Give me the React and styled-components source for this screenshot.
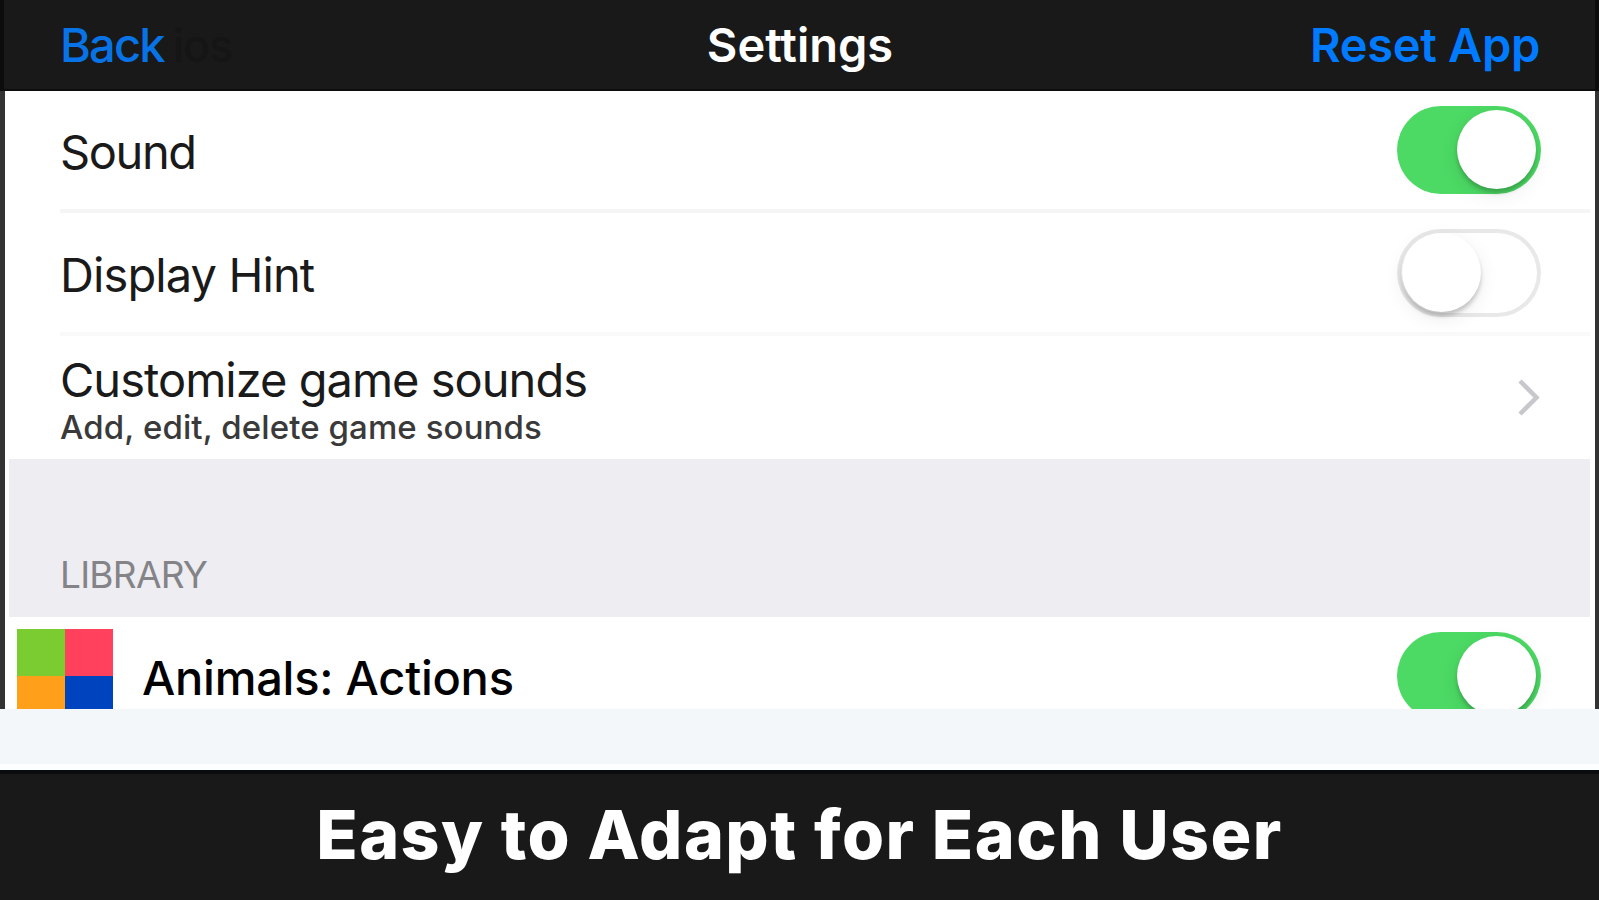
import React from "react";
import styled, { createGlobalStyle } from "styled-components";

const App = () => (
    <Screen>
        <GlobalStyle />
        <NavBar.Wrapper>
            <NavBar.Back>
                <Label $size={47} $weight={500} $spacing={-1.8} $color="#0873e6">Back</Label>
                <Label $size={45} $weight={500} $spacing={-1} $color="#151515">ios</Label>
            </NavBar.Back>
            <Label $size={47} $weight={600} $color="#fff">Settings</Label>
            <NavBar.Reset>
                <Label $size={47} $weight={600} $spacing={-0.3} $color="#007aff">Reset App</Label>
            </NavBar.Reset>
        </NavBar.Wrapper>

        <Panel>
            <Row $height={122} $line="#f5f5f6">
                <RowText>
                    <Label $size={47} $spacing={-1.4}>Sound</Label>
                </RowText>
                <Toggle on />
            </Row>
            <Row $height={123} $line="#f9f9f9">
                <RowText $top={6}>
                    <Label $size={47} $spacing={-0.9}>Display Hint</Label>
                </RowText>
                <Toggle />
            </Row>
            <Row $height={123}>
                <RowText>
                    <Label $size={47} $spacing={-0.98}>Customize game sounds</Label>
                    <Label $size={33} $weight={500} $spacing={0.1} $color="#3a3a3a">Add, edit, delete game sounds</Label>
                </RowText>
                <Chevron viewBox="0 0 22 38">
                    <path d="M2 2 L18.5 18.5 L2 35" />
                </Chevron>
            </Row>
            <SectionHeader>
                <Label $size={37} $spacing={-0.75} $color="#838388">LIBRARY</Label>
            </SectionHeader>
            <Item>
                <Tiles>
                    <Tile $color="#7acc30" />
                    <Tile $color="#ff415d" />
                    <Tile $color="#ff9f1a" />
                    <Tile $color="#0043bf" />
                </Tiles>
                <ItemName>
                    <Label $size={47} $weight={500} $spacing={-0.25} $color="#000">Animals: Actions</Label>
                </ItemName>
                <ItemToggle>
                    <Toggle on />
                </ItemToggle>
            </Item>
        </Panel>

        <Gap />
        <Footer>
            <Label $size={68} $weight={800} $spacing={1.45} $color="#fff">Easy to Adapt for Each User</Label>
        </Footer>
    </Screen>
)

const Toggle = ({ on }) => (
    <Track $on={on}>
        <Knob />
    </Track>
)

export default App;


const GlobalStyle = createGlobalStyle`
    * {
        box-sizing: border-box;
    }

    body {
        margin: 0;
        font-family: Inter, "Liberation Sans", sans-serif;
    }
`;

const Screen = styled.div`
    display: flex;
    flex-direction: column;
    width: 1599px;
    height: 900px;
    overflow: hidden;
    background: #f3f7f9;
`;

const Label = styled.span`
    font-size: ${p => p.$size}px;
    font-weight: ${p => p.$weight || 400};
    letter-spacing: ${p => p.$spacing || 0}px;
    color: ${p => p.$color || "#1a1a1a"};
    line-height: 1.2;
    white-space: nowrap;
`;

const NavBar = {
    Wrapper: styled.header`
        display: grid;
        grid-template-columns: 1fr auto 1fr;
        align-items: center;
        height: 91px;
        padding: 1px 55px 0 56px;
        background: #191919;
        border: solid #0c0c0c;
        border-width: 0 4px 2px;
    `,

    Back: styled.div`
        display: flex;
        align-items: baseline;
        gap: 9px;
    `,

    Reset: styled.div`
        display: flex;
        justify-content: flex-end;
    `,
}

const Panel = styled.main`
    height: 618px;
    overflow: hidden;
    background: #fff;
    border-left: 5px solid #333;
    border-right: 4px solid #333;
`;

const Row = styled.div`
    display: flex;
    align-items: center;
    justify-content: space-between;
    height: ${p => p.$height}px;
    margin: 0 5px 0 55px;
    padding-right: 49px;
    border-bottom: ${p => p.$line ? `4px solid ${p.$line}` : "none"};
`;

const RowText = styled.div`
    display: flex;
    flex-direction: column;
    padding-top: ${p => p.$top || 4}px;
`;

const Chevron = styled.svg`
    width: 22px;
    height: 38px;
    margin-right: 1px;
    fill: none;
    stroke: #c7c7cc;
    stroke-width: 4.5;
`;

const SectionHeader = styled.div`
    display: flex;
    align-items: flex-end;
    height: 158px;
    margin: 0 5px 0 4px;
    padding: 0 0 20px 51px;
    background: #eeedf2;
`;

const Item = styled.div`
    display: flex;
    align-items: flex-start;
    padding: 12px 54px 0 12px;
`;

const Tiles = styled.div`
    display: grid;
    grid-template-columns: 48px 48px;
    grid-template-rows: 47px 47px;
`;

const Tile = styled.div`
    background: ${p => p.$color};
`;

const ItemName = styled.div`
    flex: 1;
    padding: 21px 0 0 29px;
`;

const ItemToggle = styled.div`
    padding-top: 3px;
`;

const Track = styled.div`
    display: flex;
    justify-content: ${p => p.$on ? "flex-end" : "flex-start"};
    width: 144px;
    height: 88px;
    padding: 4px 5px;
    border-radius: 44px;
    background: ${p => p.$on ? "#4cd964" : "#fff"};
    box-shadow: ${p => p.$on ? "none" : "inset 0 0 0 4px #e8e8e8"};
`;

const Knob = styled.div`
    width: 79px;
    height: 79px;
    border-radius: 50%;
    background: #fff;
    box-shadow: 0 4px 4px rgba(0, 0, 0, 0.2), 0 6px 20px rgba(0, 0, 0, 0.08);
`;

const Gap = styled.div`
    height: 61px;
    border-bottom: 6px solid #fcfeff;
`;

const Footer = styled.footer`
    display: flex;
    align-items: center;
    justify-content: center;
    flex: 1;
    padding-bottom: 5px;
    background: #191919;
    border-top: 4px solid #0b0c0e;
`;
